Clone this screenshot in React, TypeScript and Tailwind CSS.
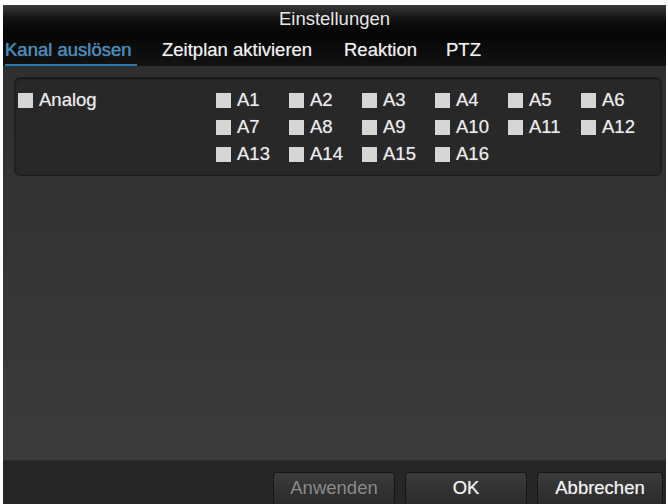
import React from 'react';

const channels = Array.from({ length: 16 }, (_, i) => `A${i + 1}`);

function Box() {
  return <span className="inline-block w-[15px] h-[15px] bg-[#d6d6d6] shrink-0" />;
}

function Check({ label }: { label: string }) {
  return (
    <div className="flex items-center h-[27px] gap-[6px]">
      <Box />
      <span className="text-[18.5px] text-[#ececec] leading-none [text-shadow:0_0_1px_rgba(255,255,255,0.5)]">{label}</span>
    </div>
  );
}

export default function App() {
  const tabs = [
    { t: 'Kanal auslösen', w: 'w-[132px]' },
    { t: 'Zeitplan aktivieren', w: 'w-[157px]' },
    { t: 'Reaktion', w: 'w-[74px]' },
    { t: 'PTZ', w: 'ml-[3px]' },
  ];

  return (
    <div
      className="w-[668px] h-[504px] bg-white pt-[5px] pl-[3px] pr-[2px] overflow-hidden"
      style={{ fontFamily: '"Liberation Sans", Arial, sans-serif' }}
    >
      <div className="flex flex-col h-[499px] bg-[#333]">
        {/* title */}
        <div className="h-[28px] shrink-0 flex items-center justify-center bg-gradient-to-b from-[#3a3a3a] via-[#121212] to-[#050505]">
          <span className="text-[18.5px] text-[#e6e6e6] leading-none">Einstellungen</span>
        </div>

        {/* tabs */}
        <div className="h-[33px] shrink-0 flex items-end gap-[25px] pl-[2px] bg-gradient-to-b from-[#060606] to-[#121212]">
          {tabs.map((tab, i) => (
            <div
              key={tab.t}
              className={`${tab.w} h-[31px] flex items-center whitespace-nowrap text-[18.5px] leading-none [text-shadow:0_0_1px_rgba(255,255,255,0.5)] ${
                i === 0 ? 'text-[#3a8ec6] border-b-2 border-[#2a79ad] pt-[2px]' : 'text-[#f0f0f0]'
              }`}
            >
              {tab.t}
            </div>
          ))}
        </div>

        {/* content */}
        <div className="flex-1 bg-gradient-to-b from-[#2f2f2f] to-[#3b3b3b] pt-[11px] pl-[11px] pr-[4px]">
          <div className="flex rounded-md border border-[#1c1c1c] bg-[#282828] pt-[9px] pb-[7px] pl-[3px] shadow-[inset_0_1px_2px_rgba(0,0,0,0.5)]">
            <div className="w-[198px] shrink-0">
              <Check label="Analog" />
            </div>
            <div className="grid grid-cols-[repeat(6,73px)]">
              {channels.map((c) => (
                <Check key={c} label={c} />
              ))}
            </div>
          </div>
        </div>

        {/* bottom bar */}
        <div className="h-[44px] shrink-0 bg-[#262626] border-t border-[#2e2e2e] flex justify-end items-start pt-[11px] pr-[3px] gap-[10px] overflow-hidden">
          <button className="w-[122px] h-[34px] shrink-0 rounded-sm border border-[#151515] bg-gradient-to-b from-[#3b3b3b] to-[#2a2a2a] text-[18.5px] text-[#8a8a8a] pb-[2px]">
            Anwenden
          </button>
          <button className="w-[122px] h-[34px] shrink-0 rounded-sm border border-[#151515] bg-gradient-to-b from-[#3b3b3b] to-[#2a2a2a] text-[18.5px] text-[#f2f2f2] pb-[2px] [text-shadow:0_0_1px_rgba(255,255,255,0.5)]">
            OK
          </button>
          <button className="w-[126px] h-[34px] shrink-0 rounded-sm border border-[#151515] bg-gradient-to-b from-[#3b3b3b] to-[#2a2a2a] text-[18.5px] text-[#f2f2f2] pb-[2px] [text-shadow:0_0_1px_rgba(255,255,255,0.5)]">
            Abbrechen
          </button>
        </div>
      </div>
    </div>
  );
}
